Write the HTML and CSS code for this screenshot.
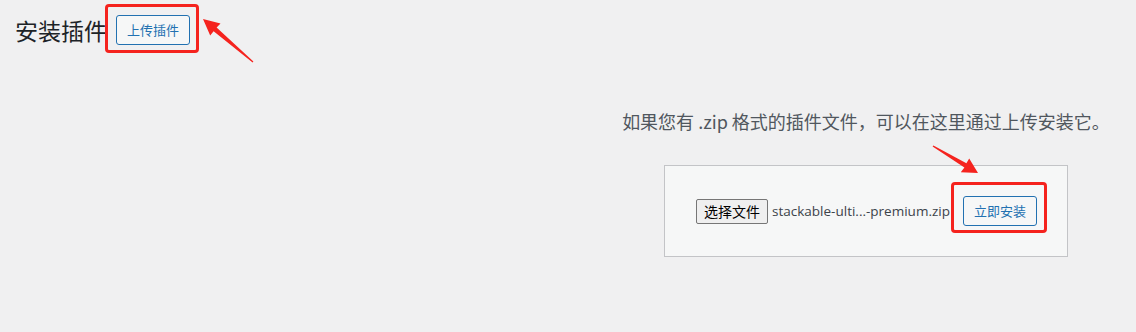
FILE: index.html
```html
<!DOCTYPE html>
<html lang="zh-CN">
<head>
<meta charset="utf-8">
<title>安装插件</title>
<link rel="stylesheet" href="styles.css">
</head>
<body>
<div class="page">
  <div class="title-row">
    <h1 class="page-title">安装插件</h1>
    <span class="title-action-wrap">
      <button class="wp-button" type="button">上传插件</button>
      <span class="mark mark-upload"></span>
    </span>
  </div>

  <div class="upload-plugin">
    <p class="install-help">如果您有 .zip 格式的插件文件，可以在这里通过上传安装它。</p>
    <form class="upload-form">
      <span class="file-input">
        <button class="file-button" type="button">选择文件</button>
        <span class="file-name">stackable-ulti...-premium.zip</span>
      </span>
      <span class="submit-wrap">
        <button class="wp-button" type="button">立即安装</button>
        <span class="mark mark-install"></span>
      </span>
    </form>
  </div>

  <svg class="arrows" width="1136" height="332" viewBox="0 0 1136 332" aria-hidden="true">
    <polygon fill="#f5231e" points="203,19 220.5,23.5 216.6,27.6 253.4,61.6 252.6,62.4 213.6,31.2 210.2,35.6"/>
    <polygon fill="#f5231e" points="978,173 960.8,172.2 964.4,167.4 932.6,146.6 933.4,145.4 966.4,163.2 969.2,158.4"/>
  </svg>
</div>
</body>
</html>
```
FILE: styles.css
```css
* { box-sizing: border-box; }

html, body {
  margin: 0;
  padding: 0;
  background: #f0f0f1;
}

body {
  font-family: "Noto Sans", "Noto Sans CJK SC", sans-serif;
  color: #1d2327;
}

.page {
  position: relative;
  width: 1136px;
  height: 332px;
  overflow: hidden;
}

.title-row {
  display: flex;
  align-items: center;
  padding: 15px 0 0 15px;
}

.page-title {
  margin: 0 9px 0 0;
  font-family: "Noto Sans CJK SC", sans-serif;
  font-size: 23px;
  font-weight: 400;
  line-height: 30px;
  color: #1d2327;
}

.title-action-wrap,
.submit-wrap {
  position: relative;
  display: inline-flex;
}

.wp-button {
  display: inline-flex;
  align-items: center;
  justify-content: center;
  height: 30px;
  padding: 0 10px;
  margin: 0;
  font-family: "Noto Sans CJK SC", sans-serif;
  font-size: 13px;
  line-height: 28px;
  color: #2271b1;
  background: #f6f7f7;
  border: 1px solid #2271b1;
  border-radius: 3px;
  cursor: pointer;
}

.mark {
  position: absolute;
  border: 3px solid #f5231e;
  border-radius: 4px;
  pointer-events: none;
}

.mark-upload {
  left: -11px;
  right: -9px;
  top: -11px;
  bottom: -8px;
}

.mark-install {
  left: -12px;
  right: -10px;
  top: -14px;
  bottom: -7px;
}

.upload-plugin {
  margin-left: 596px;
  width: 540px;
  display: flex;
  flex-direction: column;
  align-items: center;
}

.install-help {
  margin: 0;
  padding-top: 63px;
  font-family: "Noto Sans CJK SC", sans-serif;
  font-size: 18px;
  line-height: 27px;
  color: #50575e;
  white-space: nowrap;
}

.upload-form {
  margin-top: 30px;
  display: inline-flex;
  align-items: center;
  gap: 13px;
  padding: 30px;
  background: #f6f7f7;
  border: 1px solid #c3c4c7;
}

.file-input {
  display: inline-flex;
  align-items: center;
  gap: 4px;
  margin-left: 1px;
}

.file-button {
  height: 25px;
  padding: 0 7px;
  margin: 0;
  font-family: "Noto Sans CJK SC", sans-serif;
  font-size: 14px;
  line-height: 23px;
  color: #000;
  background: #efefef;
  border: 1px solid #767676;
  border-radius: 2px;
}

.file-name {
  font-family: "Open Sans", "Noto Sans CJK SC", sans-serif;
  font-size: 13.5px;
  color: #3c434a;
  white-space: nowrap;
}

.arrows {
  position: absolute;
  left: 0;
  top: 0;
  pointer-events: none;
}
```
